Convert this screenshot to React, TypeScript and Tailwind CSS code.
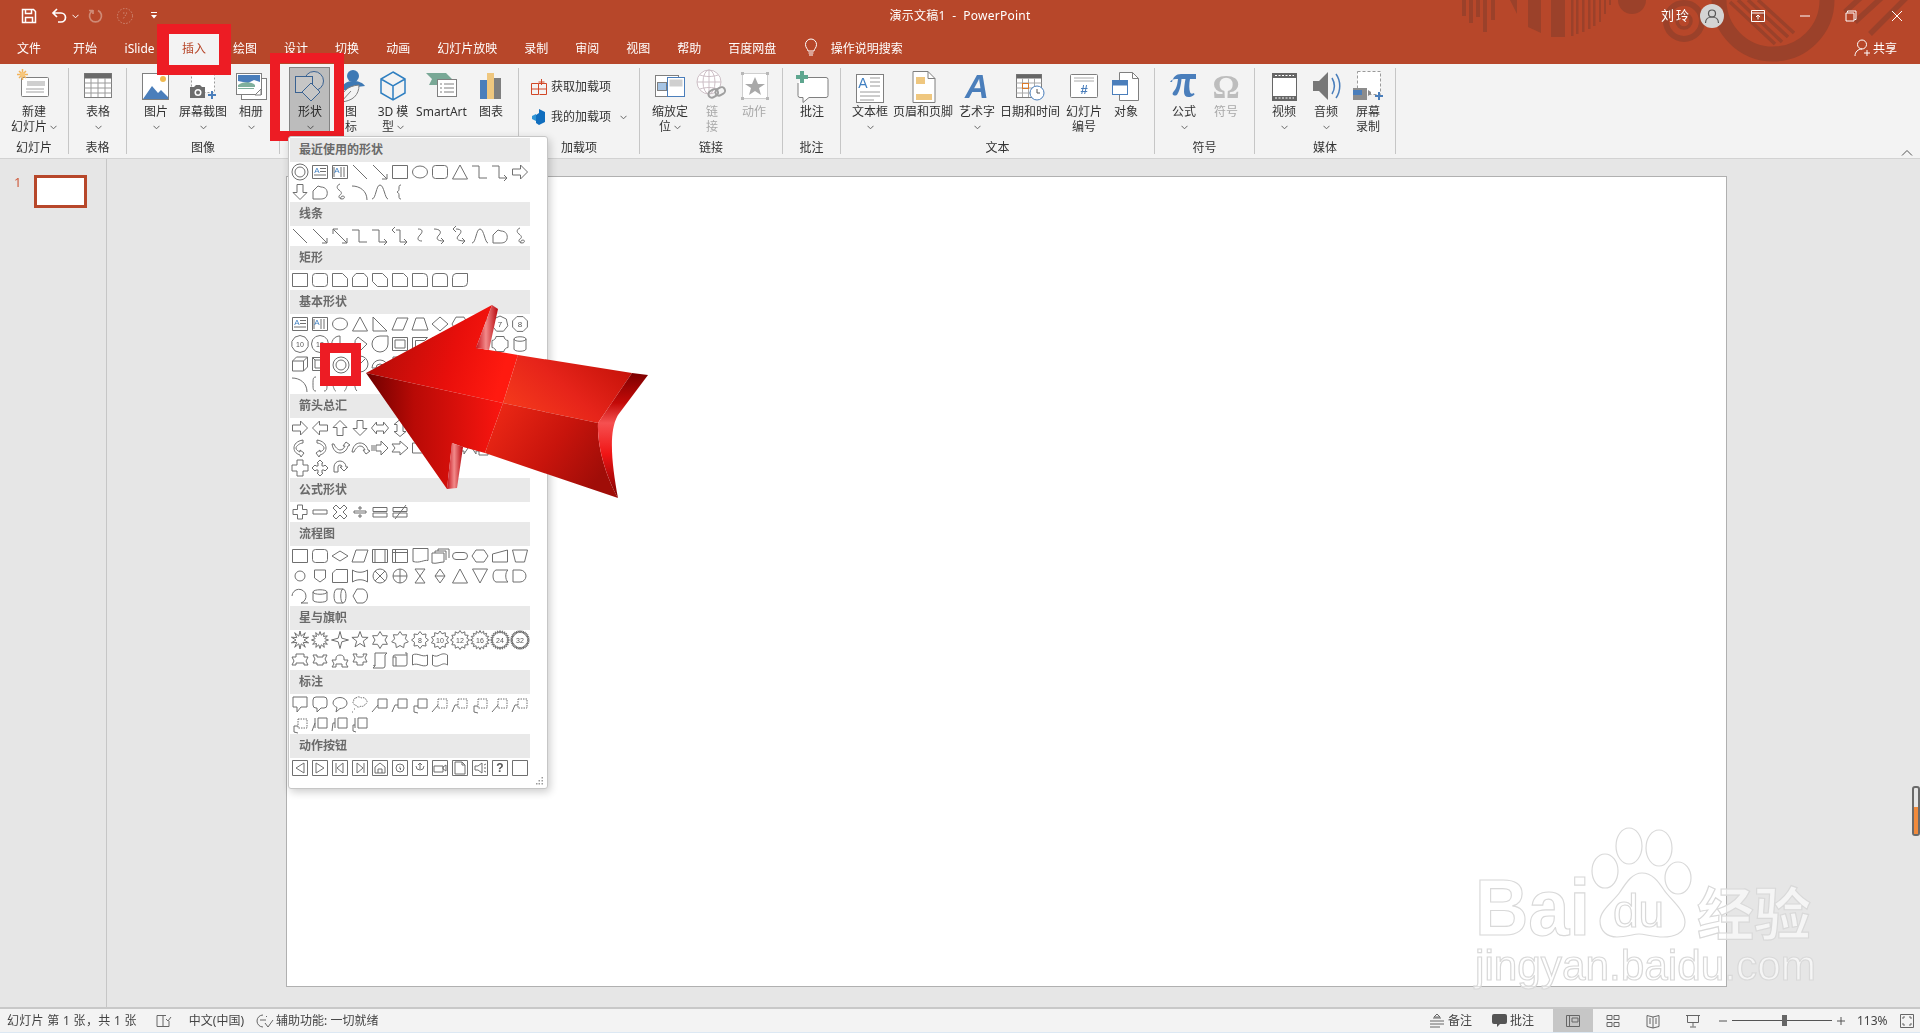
import React from "react";

type Sh = string | { d: string; dash?: string; t?: string; fs?: number; blue?: boolean };

const poly = (n: number, r: number, rot = -90) => {
  let s = "";
  for (let i = 0; i < n; i++) {
    const a = ((rot + (360 * i) / n) * Math.PI) / 180;
    s += (i ? "L" : "M") + (10 + r * Math.cos(a)).toFixed(1) + " " + (10 + r * Math.sin(a)).toFixed(1);
  }
  return s + "z";
};
const star = (n: number, r1: number, r2: number) => {
  let s = "";
  for (let i = 0; i < n * 2; i++) {
    const a = ((-90 + (180 * i) / n) * Math.PI) / 180;
    const r = i % 2 ? r2 : r1;
    s += (i ? "L" : "M") + (10 + r * Math.cos(a)).toFixed(1) + " " + (10 + r * Math.sin(a)).toFixed(1);
  }
  return s + "z";
};

const rect = "M2.5 3.5h15v13h-15z";
const round = "M5.5 3.5h9a3 3 0 0 1 3 3v7a3 3 0 0 1-3 3h-9a3 3 0 0 1-3-3v-7a3 3 0 0 1 3-3z";
const ellipse = "M2.5 10a7.5 6 0 1 0 15 0a7.5 6 0 1 0-15 0z";
const donut = "M2 10a8 8 0 1 0 16 0a8 8 0 1 0-16 0zM5 10a5 5 0 1 0 10 0a5 5 0 1 0-10 0z";
const line = "M3 3l14 14";
const arrow = "M3 3l14 14M17 12v5h-5";
const dbl = "M3 3l14 14M17 12v5h-5M3 8V3h5";
const tri = "M10 3L17.5 17H2.5z";
const rtri = "M3 3L17 17H3z";
const elbow = "M2 4h7v12h8";
const elbowA = "M2 4h7v12h7M14 13l3 3-3 3";
const elbowD = "M6 4h4v12h7M14 13l3 3-3 3M5 1L2 4l3 3";
const rightA = "M2.5 7h8V3l7 7-7 7v-4h-8z";
const leftA = "M17.5 7h-8V3l-7 7 7 7v-4h8z";
const upA = "M7 17.5v-8H3l7-7 7 7h-4v8z";
const downA = "M7 2.5v8H3l7 7 7-7h-4v-8z";
const freeform = "M3 17V9l5-5 3 1c5 0 7 4 6 8s-5 4-7 4z";
const squiggle = "M10 2c-3 1-4 4-1 6s3 4 1 5-1 4 2 4 3-3 1-3-3 2-2 3";
const arc = "M2 4c8 0 15 5 15 14";
const curve = "M2 17C6 17 6 3 10 3s5 14 8 14";
const brace = "M11 3c-2 0-2 1-2 3s0 3-2 4c2 1 2 2 2 4s0 3 2 3";
const cconn = "M8 3c5 0 5 3 2 6s-3 6 2 6";
const cconnA = "M4 3c6 0 8 3 5 6s-3 6 5 6M11 12l3 3-3 3";
const cconnD = "M6 3c6 0 6 3 3 6s-3 6 6 6M12 12l3 3-3 3M6 0L3 3l3 3";
const tbox: Sh = { d: "M2.5 3.5h15v13h-15zM10 6.5h6M10 9.5h6M4 13h12", t: "A", fs: 8, blue: true };
const vbox: Sh = { d: "M2.5 3.5h15v13h-15zM11 5v10M14 5v10M4 5v10", t: "A", fs: 8, blue: true };

const act = (g: string, t?: string): Sh => ({ d: "M2.5 2.5h15v15h-15z" + g, t, fs: t ? 12 : 8 });
const frame = "M2.5 3.5h15v13h-15zM5 6h10v8H5z";
const rCall = "M3 3h14v10h-6l-4 5v-5H3z";
const roundCall = "M6 3h8a3 3 0 0 1 3 3v5a3 3 0 0 1-3 3h-3l-4 4v-4H6a3 3 0 0 1-3-3V6a3 3 0 0 1 3-3z";
const ovalCall = "M3 9a7 5.5 0 0 1 14 0c0 3-3 5.5-7 5.5l-4 3.5 1-4.5c-2-1-4-2.500-4-4.500z";
const cloud = "M6 4c2-2 4-1 5 0 2-1 5 0 5 2 2 1 1 4-1 4 0 2-3 3-4 2-2 2-5 1-5-1-3 0-4-3-2-4-1-1 0-3 2-3z";
const c1 = "M8 5h9v9H8zM8 11L2 18";
const c2 = "M8 5h9v9H8zM8 11H5L2 18";
const c3 = "M8 5h9v9H8zM8 12H4v6l4 1";
const d1 = { d: "M8 11L2 18", dash: "M8 5h9v9H8z" };
const d2 = { d: "M8 11H5L2 18", dash: "M8 5h9v9H8z" };
const d3 = { d: "M8 12H4v6l4 1", dash: "M8 5h9v9H8z" };

const sections: { title: string; items: Sh[] }[] = [
  {
    title: "最近使用的形状",
    items: [donut, tbox, vbox, line, arrow, rect, ellipse, round, tri, elbow, elbowA, rightA, downA, freeform, squiggle, arc, curve, brace],
  },
  { title: "线条", items: [line, arrow, dbl, elbow, elbowA, elbowD, cconn, cconnA, cconnD, curve, freeform, squiggle] },
  {
    title: "矩形",
    items: [
      rect,
      round,
      "M2.500 3.500h10l5 5v8h-15z",
      "M6 3.500h8l3.500 4v9h-15v-9z",
      "M2.500 3.500h10l5 5v8h-10l-5-5z",
      "M2.500 3.500h11l4 4v9h-15z",
      "M2.500 3.500h11a4 4 0 0 1 4 4v9h-15z",
      "M6 3.500h8a3.500 3.500 0 0 1 3.500 3.500v9.500h-15V7A3.500 3.500 0 0 1 6 3.500z",
      "M6 3.500h11.500v9a4 4 0 0 1-4 4H2.500v-9a4 4 0 0 1 3.500-4z",
    ],
  },
  {
    title: "基本形状",
    items: [
      tbox,
      vbox,
      ellipse,
      tri,
      rtri,
      "M7 4h11l-5 12H2z",
      "M6 4h8l4 12H2z",
      "M10 3l8 7-8 7-8-7z",
      poly(6, 8, 0),
      poly(7, 8),
      { d: poly(7, 8), t: "7", fs: 8 },
      { d: poly(8, 8, 22.5), t: "8", fs: 8 },
      { d: poly(10, 8.5), t: "10", fs: 7 },
      { d: poly(12, 8.5), t: "12", fs: 7 },
      "M10 2v8l6 5a8 8 0 1 1-6-13z",
      "M8 3l9 7-7 7a8 8 0 0 1-2-14z",
      "M10 2h8v8a8 8 0 1 1-8-8z",
      frame,
      "M2.500 3.500h15l-3 3h-9v7l-3 3z",
      "M2.500 3.500h6v7h7v6h-13z",
      "M2 17L17 3v6L8 17z",
      "M7 3h6v4h4v6h-4v4H7v-4H3V7h4z",
      "M6 2.500h8c0 2 2 4 4 4v7c-2 0-4 2-4 4H6c0-2-2-4-4-4v-7c2 0 4-2 4-4z",
      "M4 5c0-3 12-3 12 0v10c0 3-12 3-12 0zM4 5c0 3 12 3 12 0",
      "M2.500 7l4-4h11v10l-4 4h-11zM2.500 7h11v10M13.500 7l4-4",
      "M2.500 3.500h15v13h-15zM5 6h10v8H5zM2.500 3.500L5 6M17.500 3.500L15 6",
      donut,
      "M2 10a8 8 0 1 0 16 0a8 8 0 1 0-16 0zM5 15l10-10",
      "M2 14a8 8 0 0 1 16 0h-4a4 4 0 0 0-8 0z",
      "M3 3h14v10l-4 4H3zM13 17l1-3 3-1",
      "M2 10a8 8 0 1 0 16 0a8 8 0 1 0-16 0zM7 8h.5M12.500 8h.5M6 12c2 3 6 3 8 0",
      "M10 17L3 9c-2-4 5-7 7-2 2-5 9-2 7 2z",
      "M8 2L3 9l5 2-2 7 10-10-6-1 3-5z",
      "M2 10a8 8 0 1 0 16 0a8 8 0 1 0-16 0z",
      "M13 2a8 8 0 1 0 0 16 6 8 0 0 1 0-16z",
      cloud,
      arc,
      "M6 3C3 3 3 5 3 10s0 7 3 7M14 3c3 0 3 2 3 7s0 7-3 7",
      "M6 3C4 3 4 7 2 10c2 3 2 7 4 7M14 3c2 0 2 4 4 7-2 3-2 7-4 7",
      "M7 3C4 5 4 15 7 17",
    ],
  },
  {
    title: "箭头总汇",
    items: [
      rightA,
      leftA,
      upA,
      downA,
      "M1.500 10l5-6v3h7V4l5 6-5 6v-3h-7v3z",
      "M10 1.500l6 5h-3v7h3l-6 5-6-5h3v-7H4z",
      "M10 2l3 3h-2v4h4V7l3 3-3 3v-2h-4v4h2l-3 3-3-3h2v-4H5v2l-3-3 3-3v2h4V5H7z",
      "M3 16v-4l-2 2",
      "M3 17V8h9V5l5 4-5 4v-2H6v6z",
      "M3 17V8a5 5 0 0 1 10 0v2h3l-4 4-4-4h3V8a2 2 0 0 0-4 0v9z",
      "M3 13l4-4v3h6V7h-3l4-4 4 4h-3v8H7v3z",
      "M2 14h10V7H9l4-4 4 4h-3v10H2z",
      "M13 2C7 3 4 6 4 10s3 6 6 7l1 2 3-4-4-3 0 2c-2-1-4-2-4-4 0-2 4-5 7-5z",
      "M7 2c6 1 9 4 9 8s-3 6-6 7l-1 2-3-4 4-3 0 2c2-1 4-2 4-4 0-2-4-5-7-5z",
      "M2 6c1 6 4 9 8 9s7-3 8-7l2-1-4-3-3 4 2 0c-1 2-2 4-5 4-2 0-5-3-6-6z",
      "M2 14c1-6 4-9 8-9s7 3 8 7l2 1-4 3-3-4 2 0c-1-2-2-4-5-4-2 0-5 3-6 6z",
      "M2 7v6M4 7v6M6 7h5V3l7 7-7 7v-4H6z",
      "M2 6h8V3l8 7-8 7v-3H2l3-4z",
      "M2.500 5h9l6 5-6 5h-9z",
      "M2 4h9l6 6-6 6H2l6-6z",
      "M2 3h9v14H2zM11 7h3V4l4 6-4 6v-3h-3",
      "M9 3h9v14H9zM9 7H6V4l-4 6 4 6v-3h3",
      "M3 2h14v9H3zM7 11v3H4l6 4 6-4h-3v-3",
      "M3 9h14v9H3zM7 9V6H4l6-4 6 4h-3v3",
      "M7 2h6v5h5v6h-5v5H7v-5H2V7h5z",
      "M10 2l3 3h-1v3h2l1-1 3 3-3 3-1-1h-2v3h1l-3 3-3-3h1v-3H6l-1 1-3-3 3-3 1 1h2V5H7z",
      "M4 14V9a6 6 0 0 1 12 0h2l-4 4-4-4h2a2 2 0 0 0-4 0v5z",
    ],
  },
  {
    title: "公式形状",
    items: [
      "M7.500 3h5v4.500H17v5h-4.500V17h-5v-4.500H3v-5h4.500z",
      "M3 8h14v4H3z",
      "M6 3l4 4 4-4 3 3-4 4 4 4-3 3-4-4-4 4-3-3 4-4-4-4z",
      "M4 9h12v2H4zM9 5h2v2H9zM9 13h2v2H9z",
      "M3 5.500h14v4H3zM3 11h14v4H3z",
      "M3 5.500h14v4H3zM3 11h14v4H3zM5 17L16 3",
    ],
  },
  {
    title: "流程图",
    items: [
      rect,
      round,
      "M2 10l8-5 8 5-8 5z",
      "M6 4h12l-4 12H2z",
      "M2.500 3.500h15v13h-15zM5 3.500v13M15 3.500v13",
      "M2.500 3.500h15v13h-15zM5.500 3.500v13M2.500 6.500h15",
      "M3 2.500h15v12c-4-1-8 3-15 1z",
      "M2 7h12v9c-4 0-8 2-12 1zM5 7V5h11v9M8 5V3h11v9",
      "M6 6.500h8a3.500 3.500 0 0 1 0 7H6a3.500 3.500 0 0 1 0-7z",
      "M6 4h8l4 6-4 6H6l-4-6z",
      "M2.500 8l15-4v12h-15z",
      "M2.500 4h15l-3 12h-9z",
      "M5 10a5 5 0 1 0 10 0a5 5 0 1 0-10 0z",
      "M4.500 4h11v8l-5.500 4-5.500-4z",
      "M6 3.500h11.500v13h-15V7z",
      "M2.500 4c4 3 11 3 15 0v12c-4-3-11-3-15 0z",
      "M3 10a7 7 0 1 0 14 0a7 7 0 1 0-14 0zM5 5l10 10M5 15L15 5",
      "M3 10a7 7 0 1 0 14 0a7 7 0 1 0-14 0zM3 10h14M10 3v14",
      "M5 3h10L5 17h10z",
      "M10 3l5 7-5 7-5-7zM5 10h10",
      tri,
      "M2.500 3h15L10 17z",
      "M6 4h12c-3 2-3 10 0 12H6c-4-1-4-11 0-12z",
      "M3 4h7a6 6 0 0 1 0 12H3z",
      "M2 10a7 7 0 1 1 9 7h7",
      "M3 6c0-3 14-3 14 0v8c0 3-14 3-14 0zM3 6c0 3 14 3 14 0",
      "M7 3h6c4 0 4 14 0 14H7C3 17 3 3 7 3zM13 3c-3 0-3 14 0 14",
      "M7 3h6c6 2 6 12 0 14H7L3 10z",
    ],
  },
  {
    title: "星与旗帜",
    items: [
      star(10, 9, 4),
      star(12, 8.5, 5),
      star(4, 8.5, 2.500),
      star(5, 8.5, 3.500),
      star(6, 8.5, 5),
      star(7, 8.5, 5.500),
      { d: star(8, 8.500, 6), t: "8", fs: 7 },
      { d: star(10, 9, 6.500), t: "10", fs: 7 },
      { d: star(12, 9.500, 7), t: "12", fs: 7 },
      { d: star(16, 9.500, 7), t: "16", fs: 7 },
      { d: star(24, 9.500, 7), t: "24", fs: 7 },
      { d: star(32, 9.500, 7.200), t: "32", fs: 7 },
      "M6 4h8v3h4l-2 4 2 4h-4v-2H6v2H2l2-4-2-4h4z",
      "M3 5h4v2h6V5h4l-2 4 2 4h-4v2H7v-2H3l2-4z",
      "M6 8c0-4 8-4 8 0v2h4l-2 4 2 3h-6v-3H6v3H2l2-3-2-4h4z",
      "M3 4h4c-1 2 0 3 1 3h4c1 0 2-1 1-3h4l-2 4 2 4h-4v3H7v-3H3l2-4z",
      "M6 3h11l-2 2v11a2 2 0 0 1-2 2H3l2-2V3zM3 16c1-1 2-1 2 0",
      "M3 7a2 2 0 0 1 2-2h12v9a2 2 0 0 1-2 2H3zM3 7h3v9M17 5v-2h-2",
      "M2.500 5c5-3 10 3 15 0v10c-5 3-10-3-15 0z",
      "M2.500 5c3 2 5 1 7 0s5-2 8 0v10c-3-2-5-1-7 0s-5 2-8 0z",
    ],
  },
  {
    title: "标注",
    items: [
      rCall,
      roundCall,
      ovalCall,
      { d: "M2 18h1M4 15h1", dash: cloud },
      c1,
      c2,
      c3,
      d1,
      d2,
      d3,
      d1,
      d2,
      d3,
      "M8 4h9v10H8zM5 4v10M5 9L2 17",
      "M8 4h9v10H8zM5 4v10M5 9H3l-1 8",
      "M8 4h9v10H8zM5 4v10M5 11H3v6l3 1",
    ],
  },
  {
    title: "动作按钮",
    items: [
      act("M14 5v10L6 10z"),
      act("M6 5v10l8-5z"),
      act("M13 5v10L7 10zM6 5v10"),
      act("M7 5v10l6-5zM14 5v10"),
      act("M5 15V9l5-4 5 4v6zM8 15v-4h4v4"),
      act("M6 10a4 4 0 1 0 8 0a4 4 0 1 0-8 0zM10 8v.5M9 10h1.500v2"),
      act("M6 8a4 4 0 1 0 8 0M10 5v6M8 7l2-2 2 2"),
      act("M4 8h9v6H4zM13 9l3-2v6l-3-2z"),
      act("M5 4h7l3 3v9H5zM12 4v3h3"),
      act("M5 8h3l4-3v10l-4-3H5zM14 7l2-1M14 10h2M14 13l2 1"),
      act("", "?"),
      act(""),
    ],
  },
];

function Shape({ s }: { s: Sh }) {
  const o = typeof s === "string" ? { d: s } : s;
  return (
    <svg width="20" height="20" viewBox="0 0 20 20" className="block" fill="none" stroke="#6f6f6f" strokeWidth="1">
      <path d={o.d} />
      {o.dash ? <path d={o.dash} strokeDasharray="1.500 1" /> : null}
      {o.t ? (
        <text
          x={o.blue ? 7 : 10}
          y={o.blue ? 11 : 10 + (o.fs ?? 7) * 0.36}
          textAnchor="middle"
          fontSize={o.fs ?? 7}
          fontFamily="Liberation Sans, sans-serif"
          fontWeight={o.fs === 12 ? 700 : 400}
          fill={o.blue ? "#3f7fc1" : "#555"}
          stroke="none"
        >
          {o.t}
        </text>
      ) : null}
    </svg>
  );
}

function ShapeMenu() {
  return (
    <div className="absolute left-[288px] top-[136px] z-10 w-[260px] h-[653px] bg-white border border-[#c6c6c6] rounded-[3px] p-px shadow-[2px_3px_8px_rgba(0,0,0,0.2)]">
      {sections.map((sec) => (
        <div key={sec.title}>
          <div className="h-[24px] w-[240px] bg-[#e9e9e9] pl-[9px] text-[12px] leading-[24px] font-bold text-[#6a6a6a]">{sec.title}</div>
          <div className="grid w-[240px] grid-cols-[repeat(12,20px)] auto-rows-[20px]">
            {sec.items.map((s, i) => (
              <Shape key={i} s={s} />
            ))}
          </div>
        </div>
      ))}
      <svg className="absolute right-[3px] bottom-[3px]" width="8" height="8" viewBox="0 0 8 8" fill="#9a9a9a">
        <rect x="5.500" y="0" width="1.500" height="1.500" />
        <rect x="2.500" y="3" width="1.500" height="1.500" />
        <rect x="5.500" y="3" width="1.500" height="1.500" />
        <rect x="0" y="6" width="1.500" height="1.500" />
        <rect x="2.500" y="6" width="1.500" height="1.500" />
        <rect x="5.500" y="6" width="1.500" height="1.500" />
      </svg>
    </div>
  );
}

const Chev = ({ c = "#666" }: { c?: string }) => (
  <svg width="7" height="5" viewBox="0 0 7 5" fill="none" stroke={c} className="inline-block align-middle">
    <path d="M0.500 0.800L3.500 3.800L6.500 0.800" />
  </svg>
);

const Ic = ({ children }: { children: React.ReactNode }) => (
  <svg width="36" height="36" viewBox="0 0 36 36" fill="none" className="block">
    {children}
  </svg>
);

const G = "#7f7f7f";
const B = "#4a7ebb";
const icons: Record<string, React.ReactNode> = {
  newSlide: (
    <Ic>
      <rect x="5.500" y="9.500" width="27" height="19" rx="1" fill="#fff" stroke={G} />
      <rect x="11" y="13" width="18" height="5" fill="#cfcfcf" />
      <path d="M10 21h18M10 24h18" stroke="#a0a0a0" />
      <path d="M3 3l7 7M10 3l-7 7M6.500 1v11M1 6.500h11" stroke="#f2b35a" strokeWidth="1.500" />
      <circle cx="6.500" cy="6.500" r="2.500" fill="#f7c77c" />
    </Ic>
  ),
  table: (
    <Ic>
      <rect x="4.500" y="5.500" width="27" height="24" fill="#fff" stroke={G} />
      <rect x="4.500" y="5.500" width="27" height="5" fill="#6a6a6a" />
      <path d="M4.500 15h27M4.500 20h27M4.500 25h27M11 10v19M18 10v19M25 10v19" stroke="#9a9a9a" />
    </Ic>
  ),
  picture: (
    <Ic>
      <rect x="4.500" y="5.500" width="26" height="26" fill="#fff" stroke={G} />
      <circle cx="25" cy="11" r="3" fill="#f0b94f" />
      <path d="M5 31l9-13 6 7 3-3 7 7v2z" fill={B} />
    </Ic>
  ),
  screenshot: (
    <Ic>
      <rect x="6.500" y="4.500" width="23" height="20" stroke="#9a9a9a" strokeDasharray="2 2" fill="#fff" />
      <path d="M5 19h4l2-2h4l2 2h3v11H5z" fill="#6d6d6d" />
      <circle cx="13" cy="24.500" r="3.500" fill="#fff" />
      <circle cx="13" cy="24.500" r="2" fill="#6d6d6d" />
      <path d="M27 23v8M23 27h8" stroke={B} strokeWidth="2" />
    </Ic>
  ),
  album: (
    <Ic>
      <rect x="8.500" y="10.500" width="25" height="21" fill="#fff" stroke={G} />
      <rect x="3.500" y="5.500" width="25" height="21" fill="#fff" stroke={G} />
      <path d="M5 7h22v7l-6-2-6 3-10-2z" fill={B} />
      <path d="M5 17c6-4 14-3 17 0v2H5z" fill="#7fb09c" />
      <path d="M5 20h16v1H5z" fill="#7fb09c" />
      <path d="M22 27l6-6v6z" fill="#fff" stroke={G} />
    </Ic>
  ),
  shapes: (
    <Ic>
      <circle cx="22" cy="13" r="9.500" fill="#fff" stroke={B} />
      <rect x="3.500" y="8.500" width="17" height="16" fill="#fff" stroke={B} />
      <path d="M19 15l9 9-9 9-9-9z" fill="#fff" stroke={B} />
    </Ic>
  ),
  icons: (
    <Ic>
      <circle cx="20" cy="8" r="6" fill="#3e79b4" />
      <path d="M9 22c0-6 5-9 11-9s10 2 12 5l-8 1v3z" fill="#3e79b4" />
      <path d="M8 34c0-10 6-16 18-17 0 10-6 16-18 17zM8 34l10-11" fill="#f3f3f3" stroke={G} />
    </Ic>
  ),
  cube: (
    <Ic>
      <path d="M18 4l12 7v14l-12 7-12-7V11zM6 11l12 7 12-7M18 18v14" stroke="#2f7fc1" strokeWidth="1.500" fill="#f3f3f3" />
    </Ic>
  ),
  smart: (
    <Ic>
      <path d="M2 5h20l6 6-6 6H5l3-6z" fill="#79a896" />
      <rect x="13.500" y="11.500" width="19" height="17" fill="#fff" stroke={G} />
      <path d="M16 16h2M20 16h10M16 20h2M20 20h10M16 24h2M20 24h10" stroke={G} />
    </Ic>
  ),
  chart: (
    <Ic>
      <rect x="7" y="12" width="7" height="19" fill={B} />
      <rect x="14" y="5" width="7" height="26" fill="#efc77f" />
      <rect x="21" y="10" width="7" height="21" fill="#7f7f7f" />
    </Ic>
  ),
  zoom: (
    <Ic>
      <rect x="3.500" y="7.500" width="23" height="21" fill="#fff" stroke={G} />
      <rect x="5.500" y="14.500" width="9" height="8" fill="#a6c4e4" stroke={G} />
      <path d="M14 18l3-3" stroke={B} />
      <rect x="15.500" y="9.500" width="17" height="19" fill="#fff" stroke={B} />
      <rect x="17.500" y="11.500" width="13" height="7" fill="#cfcfcf" />
    </Ic>
  ),
  link: (
    <Ic>
      <circle cx="15" cy="14" r="12" stroke="#cdbfc6" fill="#fff" />
      <path d="M3 14h24M15 2v24M6 7c6 2 12 2 18 0M6 21c6-2 12-2 18 0" stroke="#cdbfc6" />
      <ellipse cx="15" cy="14" rx="6" ry="12" stroke="#cdbfc6" />
      <rect x="14" y="22" width="10" height="7" rx="3.500" transform="rotate(-30 19 25)" stroke="#9f9f9f" strokeWidth="2" fill="none" />
      <rect x="21" y="20" width="10" height="7" rx="3.500" transform="rotate(-30 26 23)" stroke="#9f9f9f" strokeWidth="2" fill="none" />
    </Ic>
  ),
  action: (
    <Ic>
      <rect x="6.500" y="5.500" width="25" height="25" stroke="#cfcfcf" fill="#fff" />
      <path d="M19 9l3 7h7l-6 4 2 7-6-4-6 4 2-7-6-4h7z" fill="#a9a9a9" />
      <path d="M5 4h3v3H5zM30 4h3v3h-3zM5 29h3v3H5zM30 29h3v3h-3z" fill="#b8b8b8" />
    </Ic>
  ),
  comment: (
    <Ic>
      <path d="M8 9.500h24a2 2 0 0 1 2 2v16a2 2 0 0 1-2 2H15l-6 5v-5H6a2 2 0 0 1-2-2V15" fill="#fff" stroke={G} />
      <path d="M6 3h4v4h4v4h-4v4H6v-4H2V7h4z" fill="#5ea68f" />
    </Ic>
  ),
  textbox: (
    <Ic>
      <rect x="4.500" y="6.500" width="27" height="28" fill="#fff" stroke={G} />
      <text x="11" y="20" fontSize="14" fontFamily="Liberation Sans, sans-serif" textAnchor="middle" fill="#3f7fc1">A</text>
      <path d="M18 10h10M18 14h10M18 18h10M8 24h20M8 28h20M8 32h14" stroke="#9a9a9a" />
    </Ic>
  ),
  header: (
    <Ic>
      <path d="M8 3.500h15l7 7v24H8z" fill="#fff" stroke={G} />
      <path d="M23 3.500v7h7" stroke={G} />
      <rect x="11" y="9" width="9" height="7" fill="#efc77f" />
      <rect x="11" y="26" width="16" height="6" fill="#efc77f" />
    </Ic>
  ),
  wordart: (
    <Ic>
      <text x="18" y="30" fontSize="33" fontStyle="italic" fontWeight="700" fontFamily="Liberation Sans, sans-serif" textAnchor="middle" fill="#4a7ebb">A</text>
    </Ic>
  ),
  date: (
    <Ic>
      <rect x="4.500" y="6.500" width="25" height="23" fill="#fff" stroke={G} />
      <rect x="4.500" y="6.500" width="25" height="4" fill="#666" />
      <path d="M4.500 15h25M4.500 20h25M4.500 25h25M10.500 10v19M16.500 10v19M22.500 10v19" stroke="#a8a8a8" />
      <rect x="10.500" y="15.500" width="6" height="5" stroke="#dc7a2a" />
      <circle cx="25" cy="25" r="7" fill="#fff" stroke={B} />
      <path d="M25 21v4h3" stroke="#555" />
    </Ic>
  ),
  number: (
    <Ic>
      <rect x="4.500" y="6.500" width="27" height="23" rx="1" fill="#fff" stroke={G} />
      <path d="M8 10h20M8 13h20" stroke="#aaa" />
      <text x="18" y="26" fontSize="13" fontWeight="700" fontFamily="Liberation Sans, sans-serif" textAnchor="middle" fill="#4a7ebb">#</text>
    </Ic>
  ),
  object: (
    <Ic>
      <path d="M11.500 4.500h13l6 6v22h-19z" fill="#fff" stroke={G} />
      <path d="M24.500 4.500v6h6" stroke={G} />
      <rect x="4.500" y="12.500" width="15" height="14" fill="#fff" stroke={B} />
      <rect x="4.500" y="12.500" width="15" height="5" fill={B} />
    </Ic>
  ),
  pi: (
    <Ic>
      <path
        d="M6 14c1-5 4-8 9-8h15v5h-6c-1 5-1 10 0 13 .6 2 2 2 4 1l.5 1.500c-2 2-4 2.500-6 2.500-3 0-4.500-2-4.500-5 0-4 .5-8 1.500-13h-4c-.5 6-2 12-4 15-1 2-4 2-5 0 0-2 2-3 3-5 1.500-3 2-6 2.500-10h-2c-3 0-5 1-6 3z"
        fill="#4a7ebb"
      />
    </Ic>
  ),
  omega: (
    <Ic>
      <text x="18" y="30" fontSize="34" fontWeight="700" fontFamily="Liberation Serif, serif" textAnchor="middle" fill="#bdbdbd">Ω</text>
    </Ic>
  ),
  video: (
    <Ic>
      <rect x="6.500" y="5.500" width="24" height="27" fill="#fff" stroke="#666" />
      <path d="M6.500 6h24v4h-24zM6.500 28h24v4h-24z" fill="#666" />
      <path d="M9 7.500h19M9 30h19" stroke="#fff" strokeDasharray="2 1.500" />
    </Ic>
  ),
  audio: (
    <Ic>
      <path d="M5 13h6l9-9v28l-9-9H5z" fill="#777" />
      <path d="M24 10c3 5 3 11 0 16M28 6c5 7 5 17 0 24" stroke={B} strokeWidth="1.500" />
    </Ic>
  ),
  record: (
    <Ic>
      <rect x="7.500" y="3.500" width="23" height="23" stroke="#9a9a9a" strokeDasharray="3 2" fill="#fff" />
      <rect x="3" y="20" width="14" height="12" fill="#8c8c8c" />
      <rect x="3" y="22" width="9" height="5" fill={B} />
      <path d="M18 22v6l3-2v-2z" fill="#8c8c8c" />
      <path d="M29 24v8M25 28h8" stroke={B} strokeWidth="2" />
    </Ic>
  ),
};

type Btn = { w: string; icon: string; l1: string; l2?: string; chev?: boolean; dim?: boolean; hl?: boolean };

function RibbonBtn({ b }: { b: Btn }) {
  return (
    <div className={`${b.w} flex flex-col items-center ${b.dim ? "text-[#a8a8a8]" : "text-[#333]"}`}>
      <div className="h-[36px] w-[36px]">{icons[b.icon]}</div>
      <div className="h-[15px] whitespace-nowrap text-[12px] leading-[15px]">{b.l1}</div>
      <div className="h-[15px] whitespace-nowrap text-[12px] leading-[15px]">
        {b.l2}
        {b.chev ? (
          <span className={b.l2 ? "ml-[3px]" : ""}>
            <Chev />
          </span>
        ) : null}
      </div>
    </div>
  );
}

function Group({ w, pl, label, btns, children }: { w: string; pl: string; label: string; btns?: Btn[]; children?: React.ReactNode }) {
  return (
    <div className={`${w} mt-[4px] h-[86px] shrink-0 border-r border-[#c6c6c6]`}>
      <div className={`flex h-[72px] ${pl}`}>
        {btns?.map((b) => (
          <RibbonBtn key={b.icon} b={b} />
        ))}
        {children}
      </div>
      <div className="h-[14px] text-center text-[12px] leading-[16px] text-[#333]">{label}</div>
    </div>
  );
}

const tabs: { t: string; c: string }[] = [
  { t: "文件", c: "px-[13.500px] mr-[5px]" },
  { t: "开始", c: "px-[13.500px]" },
  { t: "iSlide", c: "px-[14px]" },
  { t: "插入", c: "px-[13.500px] bg-[#f3f3f3] text-[#b7472a]" },
  { t: "绘图", c: "px-[13.500px]" },
  { t: "设计", c: "px-[13.500px]" },
  { t: "切换", c: "px-[13.500px]" },
  { t: "动画", c: "px-[13.500px]" },
  { t: "幻灯片放映", c: "px-[13.500px]" },
  { t: "录制", c: "px-[13.500px]" },
  { t: "审阅", c: "px-[13.500px]" },
  { t: "视图", c: "px-[13.500px]" },
  { t: "帮助", c: "px-[13.500px]" },
  { t: "百度网盘", c: "px-[13.500px]" },
];

function TitleArt() {
  const c = "#9b412a";
  return (
    <svg className="absolute left-[1400px] top-0" width="520" height="64" viewBox="0 0 520 64" fill={c}>
      <rect x="62" y="0" width="4" height="16" />
      <rect x="69" y="0" width="4" height="23" />
      <rect x="76" y="0" width="4" height="17" />
      <rect x="83" y="0" width="4" height="32" />
      <rect x="91" y="0" width="4" height="20" />
      <path d="M110 0h7v14z" />
      <path d="M128 0h13v33l-13-6z" />
      <path d="M151 0h14v37h-14z" />
      <rect x="171" y="0" width="2.500" height="36" />
      <rect x="176" y="0" width="2.500" height="34" />
      <rect x="182" y="0" width="2.500" height="32" />
      <rect x="188" y="0" width="2.500" height="29" />
      <rect x="193" y="0" width="2.500" height="26" />
      <rect x="199" y="0" width="2" height="22" />
      <rect x="204" y="0" width="2" height="14" />
      <rect x="209" y="0" width="2" height="5" />
      <circle cx="232" cy="0" r="14" />
      <circle cx="284" cy="21" r="18" fill="none" stroke={c} strokeWidth="6" />
      <circle cx="284" cy="21" r="7" fill="none" stroke={c} strokeWidth="3.500" />
      <circle cx="373" cy="0" r="54" fill="none" stroke={c} strokeWidth="15" />
      <path d="M330 2l45 42M338 0l44 42M348 0l40 37M358 0l36 33" stroke={c} strokeWidth="3.500" />
      <path d="M445 12l24-22M455 22l35-32M470 34l44-44" stroke={c} strokeWidth="5.500" />
    </svg>
  );
}

function RedArrow() {
  return (
    <svg className="absolute left-[350px] top-[290px] z-20" width="310" height="220" viewBox="0 0 310 220">
      <defs>
        <linearGradient id="a1" x1="0" y1="0" x2="1" y2="0.200">
          <stop offset="0" stopColor="#a80c08" />
          <stop offset="0.650" stopColor="#e80f0b" />
          <stop offset="1" stopColor="#ff1a10" />
        </linearGradient>
        <linearGradient id="a2" x1="0" y1="0" x2="1" y2="0">
          <stop offset="0" stopColor="#6e0000" />
          <stop offset="0.350" stopColor="#b80a06" />
          <stop offset="1" stopColor="#fb1610" />
        </linearGradient>
        <linearGradient id="a3" x1="0" y1="0.800" x2="1" y2="0.200">
          <stop offset="0" stopColor="#f63b1c" />
          <stop offset="0.500" stopColor="#e6241a" />
          <stop offset="1" stopColor="#c51209" />
        </linearGradient>
        <linearGradient id="a4" x1="0" y1="0" x2="1" y2="0.500">
          <stop offset="0" stopColor="#f22b17" />
          <stop offset="0.600" stopColor="#c8140c" />
          <stop offset="1" stopColor="#a00d08" />
        </linearGradient>
        <linearGradient id="a5" x1="0" y1="0" x2="0" y2="1">
          <stop offset="0" stopColor="#7c0000" />
          <stop offset="0.240" stopColor="#c40a08" />
          <stop offset="0.400" stopColor="#f65050" />
          <stop offset="0.650" stopColor="#f01515" />
          <stop offset="1" stopColor="#7f0000" />
        </linearGradient>
        <linearGradient id="a6" x1="0" y1="0" x2="1" y2="0">
          <stop offset="0" stopColor="#c4101a" />
          <stop offset="0.450" stopColor="#f28a8a" />
          <stop offset="1" stopColor="#b8060c" />
        </linearGradient>
      </defs>
      <path d="M16 83L142 15L126 58L139 60L168 65L153 113z" fill="url(#a1)" />
      <path d="M16 83L153 113L135 163L113 157L102 153L97 199z" fill="url(#a2)" />
      <path d="M168 65L282 83L248 133L153 113z" fill="url(#a3)" />
      <path d="M153 113L248 133C247 160 258 190 268 208L135 163z" fill="url(#a4)" />
      <path d="M282 83L298 85L268 125C258 142 262 175 268 208C258 190 247 160 248 133z" fill="url(#a5)" />
      <path d="M142 15L148 19L139 60L126 58z" fill="url(#a6)" />
      <path d="M102 153L113 157L107 198L97 199z" fill="url(#a6)" />
    </svg>
  );
}

function Watermark() {
  const st = { fill: "#ffffff", fillOpacity: 0.6, stroke: "#d9d9d9", strokeWidth: 1.2 };
  return (
    <svg className="absolute left-[1470px] top-[825px] z-10" width="350" height="170" viewBox="0 0 350 170">
      <g {...st}>
        <text x="5" y="110" fontSize="79" fontWeight="700" fontFamily="Liberation Sans, sans-serif" textLength="115" lengthAdjust="spacingAndGlyphs">Bai</text>
        <ellipse cx="159" cy="21" rx="13" ry="18" />
        <ellipse cx="189" cy="23" rx="13" ry="18" />
        <ellipse cx="135" cy="46" rx="13" ry="17" />
        <ellipse cx="208" cy="53" rx="13" ry="16" />
        <path d="M172 48c10 0 16 8 22 17s21 20 21 32c0 12-12 15-22 15-10 0-18-3-24-3s-12 3-22 3c-10 0-17-6-17-16 0-11 14-20 20-29s12-19 22-19z" />
        <text x="143" y="102" fontSize="46" fontFamily="Liberation Sans, sans-serif">du</text>
        <text x="227" y="110" fontSize="57" fontWeight="700" fontFamily="Noto Sans CJK SC, sans-serif">经验</text>
        <text x="5" y="155" fontSize="42.300" fontFamily="Liberation Sans, sans-serif">jingyan.baidu.com</text>
      </g>
    </svg>
  );
}

const StatusIcon = ({ children, w = 16 }: { children: React.ReactNode; w?: number }) => (
  <svg width={w} height="16" viewBox={`0 0 ${w} 16`} fill="none" stroke="#666" className="block">
    {children}
  </svg>
);

export default function App() {
  return (
    <div className="relative flex h-[1033px] w-[1920px] flex-col overflow-hidden bg-[#e6e6e6] font-['Noto_Sans','Noto_Sans_CJK_SC','Liberation_Sans',sans-serif] text-[12px]">
      <div className="relative h-[64px] shrink-0 bg-[#b7472a] text-white">
        <TitleArt />
        <div className="relative grid h-[32px] grid-cols-[1fr_auto_1fr] items-center">
          <div className="flex items-center pl-[21px]">
            <svg width="16" height="16" viewBox="0 0 16 16" fill="none" stroke="#fff" strokeWidth="1.500">
              <path d="M1.500 1.500h11l2 2v11h-13zM4.500 1.500v4h6v-4M4.500 14.500v-5h7v5" />
            </svg>
            <svg className="ml-[14px]" width="18" height="16" viewBox="0 0 18 16" fill="none" stroke="#fff" strokeWidth="1.700">
              <path d="M6 1L2 5l4 4M2 5h8a4.500 4.500 0 0 1 0 9H7" />
            </svg>
            <span className="ml-[3px]">
              <Chev c="#fff" />
            </span>
            <svg className="ml-[8px]" width="18" height="16" viewBox="0 0 18 16" fill="none" stroke="#cf8a76" strokeWidth="1.700">
              <path d="M11 2.500a6 6 0 1 1-5 0M6 2v4M6 2.500H2" />
            </svg>
            <svg className="ml-[11px]" width="18" height="18" viewBox="0 0 18 18" fill="none" stroke="#cf8a76" strokeDasharray="1.500 1.500">
              <circle cx="9" cy="9" r="7.500" />
              <path d="M7 6h4l-4 6" />
            </svg>
            <svg className="ml-[15px]" width="10" height="10" viewBox="0 0 10 10" fill="#fff">
              <rect x="2" y="1" width="6" height="1" />
              <path d="M2 4h6L5 7.500z" />
            </svg>
          </div>
          <div className="whitespace-pre tracking-[0.25px] text-[12px]">演示文稿1  -  PowerPoint</div>
          <div className="flex items-center justify-end">
            <span className="mr-[9px] tracking-[2px] text-[13px]">刘玲</span>
            <div className="flex h-[24px] w-[24px] items-center justify-center rounded-full bg-[#d4d4d4]">
              <svg width="16" height="16" viewBox="0 0 16 16" fill="none" stroke="#555" strokeWidth="1.200">
                <circle cx="8" cy="5.500" r="3.500" />
                <path d="M1.500 15c0-4 3-6 6.500-6s6.500 2 6.500 6" />
              </svg>
            </div>
            <svg className="ml-[27px]" width="14" height="12" viewBox="0 0 14 12" fill="none" stroke="#fff">
              <path d="M.5 .5h13v11H.5zM.5 3h13M7 9.500V5M5 7l2-2 2 2" />
            </svg>
            <svg className="ml-[34px]" width="12" height="12" viewBox="0 0 12 12" stroke="#fff">
              <path d="M1 6h10" />
            </svg>
            <svg className="ml-[34px]" width="12" height="12" viewBox="0 0 12 12" fill="none" stroke="#fff">
              <path d="M2.500 2.500V1h8.500v8.500H9.500M1 3h8v8H1z" />
            </svg>
            <svg className="ml-[34px] mr-[17px]" width="12" height="12" viewBox="0 0 12 12" stroke="#fff">
              <path d="M1 1l10 10M11 1L1 11" />
            </svg>
          </div>
        </div>
        <div className="relative flex h-[32px] items-center pl-[3.500px]">
          {tabs.map((t) => (
            <div key={t.t} className={`flex h-[32px] items-center pt-[2px] ${t.c}`}>
              {t.t}
            </div>
          ))}
          <svg className="ml-[13px]" width="16" height="20" viewBox="0 0 16 20" fill="none" stroke="#fff">
            <path d="M5 13c0-2-2.500-3-2.500-6.500a5.500 5.500 0 0 1 11 0C13.500 10 11 11 11 13zM5.500 15h5M6 17h4" />
          </svg>
          <div className="ml-[12px] pt-[2px]">操作说明搜索</div>
          <div className="ml-auto mr-[23px] flex items-center gap-[3px]">
            <svg width="16" height="18" viewBox="0 0 16 18" fill="none" stroke="#fff">
              <circle cx="8" cy="5.500" r="4.500" />
              <path d="M1 17c0-4 3-7 7-7M10 14h6M13 11v6" />
            </svg>
            <span className="pt-[2px]">共享</span>
          </div>
        </div>
      </div>

      <div className="flex h-[95px] shrink-0 border-b border-[#d2d2d2] bg-[#f3f3f3]">
        <Group w="w-[69px]" pl="pl-[6px]" label="幻灯片" btns={[{ w: "w-[56px]", icon: "newSlide", l1: "新建", l2: "幻灯片", chev: true }]} />
        <Group w="w-[58px]" pl="pl-[7px]" label="表格" btns={[{ w: "w-[44px]", icon: "table", l1: "表格", chev: true }]} />
        <Group
          w="w-[153px]"
          pl="pl-[7px]"
          label="图像"
          btns={[
            { w: "w-[44px]", icon: "picture", l1: "图片", chev: true },
            { w: "w-[50px]", icon: "screenshot", l1: "屏幕截图", chev: true },
            { w: "w-[46px]", icon: "album", l1: "相册", chev: true },
          ]}
        />
        <Group
          w="w-[239px]"
          pl="pl-[9px]"
          label="插图"
          btns={[
            { w: "w-[42px]", icon: "shapes", l1: "形状", chev: true },
            { w: "w-[40px]", icon: "icons", l1: "图", l2: "标" },
            { w: "w-[44px]", icon: "cube", l1: "3D 模", l2: "型", chev: true },
            { w: "w-[53px]", icon: "smart", l1: "SmartArt" },
            { w: "w-[46px]", icon: "chart", l1: "图表" },
          ]}
        />
        <Group w="w-[121px]" pl="pl-[11px]" label="加载项">
          <div className="flex flex-col gap-[10px] pt-[9px] text-[#333]">
            <div className="flex h-[20px] items-center gap-[2px]">
              <svg width="18" height="18" viewBox="0 0 18 18" fill="none" stroke="#d24726">
                <path d="M1.500 5.500h7v11h-7zM1.500 11h15v5.500h-7M8.500 5.500h8v5.500M11.500 1v6M8.500 4h6" />
              </svg>
              <span className="ml-[1px] whitespace-nowrap">获取加载项</span>
            </div>
            <div className="flex h-[20px] items-center gap-[2px]">
              <svg width="18" height="18" viewBox="0 0 18 18">
                <path d="M9 1l6 3v10l-6 3-3-2V7l3-2z" fill="#106ebe" />
                <path d="M2 8l4-2v7l-4-2z" fill="#2f95d6" />
              </svg>
              <span className="ml-[1px] whitespace-nowrap">我的加载项</span>
              <span className="ml-[7px]">
                <Chev />
              </span>
            </div>
          </div>
        </Group>
        <Group
          w="w-[143px]"
          pl="pl-[8px]"
          label="链接"
          btns={[
            { w: "w-[44px]", icon: "zoom", l1: "缩放定", l2: "位", chev: true },
            { w: "w-[40px]", icon: "link", l1: "链", l2: "接", dim: true },
            { w: "w-[44px]", icon: "action", l1: "动作", dim: true },
          ]}
        />
        <Group w="w-[58px]" pl="pl-[7px]" label="批注" btns={[{ w: "w-[44px]", icon: "comment", l1: "批注" }]} />
        <Group
          w="w-[314px]"
          pl="pl-[7px]"
          label="文本"
          btns={[
            { w: "w-[44px]", icon: "textbox", l1: "文本框", chev: true },
            { w: "w-[62px]", icon: "header", l1: "页眉和页脚" },
            { w: "w-[46px]", icon: "wordart", l1: "艺术字", chev: true },
            { w: "w-[60px]", icon: "date", l1: "日期和时间" },
            { w: "w-[48px]", icon: "number", l1: "幻灯片", l2: "编号" },
            { w: "w-[36px]", icon: "object", l1: "对象" },
          ]}
        />
        <Group
          w="w-[100px]"
          pl="pl-[8px]"
          label="符号"
          btns={[
            { w: "w-[42px]", icon: "pi", l1: "公式", chev: true },
            { w: "w-[42px]", icon: "omega", l1: "符号", dim: true },
          ]}
        />
        <Group
          w="w-[141px]"
          pl="pl-[8px]"
          label="媒体"
          btns={[
            { w: "w-[42px]", icon: "video", l1: "视频", chev: true },
            { w: "w-[42px]", icon: "audio", l1: "音频", chev: true },
            { w: "w-[42px]", icon: "record", l1: "屏幕", l2: "录制" },
          ]}
        />
        <div className="ml-auto mr-[7px] self-end pb-[1px]">
          <svg width="12" height="8" viewBox="0 0 12 8" fill="none" stroke="#555">
            <path d="M1 6.500L6 1.500l5 5" />
          </svg>
        </div>
      </div>

      <div className="flex min-h-0 flex-1">
        <div className="flex w-[107px] shrink-0 items-start border-r border-[#c6c6c6] pl-[14px] pt-[16px]">
          <span className="w-[20px] text-[13px] leading-[14px] text-[#cf5a3c]">1</span>
          <div className="h-[33px] w-[53px] border-[3px] border-[#b7472a] bg-white" />
        </div>
        <div className="min-w-0 flex-1 pl-[179px] pt-[17px]">
          <div className="h-[811px] w-[1441px] border border-[#b0b0b0] bg-white" />
        </div>
      </div>

      <div className="flex h-[26px] shrink-0 items-center border-t-2 border-b border-t-[#c8c8c8] border-b-[#dce8f3] bg-[#f3f3f3] pl-[7px] text-[#444]">
        <span className="whitespace-pre tracking-[0.3px]">幻灯片 第 1 张，共 1 张</span>
        <span className="ml-[19px]">
          <StatusIcon>
            <path d="M1 2.500h6v11H1zM7 2.500h3M7 13.500h6V8M10 6l2 2 3-4" />
          </StatusIcon>
        </span>
        <span className="ml-[17px]">中文(中国)</span>
        <span className="ml-[12px]">
          <StatusIcon w={18}>
            <path d="M7 2a6 6 0 1 0 0 12M10 3l1 1M4 7h6M9 10l3 4 5-7" />
          </StatusIcon>
        </span>
        <span className="ml-[2px] whitespace-pre">辅助功能: 一切就绪</span>
        <div className="ml-auto flex h-full items-center">
          <StatusIcon>
            <path d="M4 5h8M1 8h14M1 11h14M1 14h10M8 1l3 3H5z" />
          </StatusIcon>
          <span className="ml-[3px] w-[30px]">备注</span>
          <svg className="ml-[14px]" width="15" height="15" viewBox="0 0 15 15" fill="#555">
            <path d="M2 1h11a2 2 0 0 1 2 2v6a2 2 0 0 1-2 2H8l-3 3v-3H2a2 2 0 0 1-2-2V3a2 2 0 0 1 2-2z" />
          </svg>
          <span className="ml-[3px]">批注</span>
          <div className="ml-[19px] flex h-full w-[40px] items-center justify-center bg-[#c6c6c6]">
            <StatusIcon>
              <path d="M1.500 2.500h13v11h-13zM4.500 2.500v11M7 5h6v4H7z" />
            </StatusIcon>
          </div>
          <div className="flex h-full w-[40px] items-center justify-center">
            <StatusIcon>
              <path d="M2 2.500h5v4H2zM9 2.500h5v4H9zM2 9.500h5v4H2zM9 9.500h5v4H9z" />
            </StatusIcon>
          </div>
          <div className="flex h-full w-[40px] items-center justify-center">
            <StatusIcon>
              <path d="M2 2.500l6 1.500 6-1.500v11L8 15l-6-1.500zM8 4v11M4 6h2M4 8h2M4 10h2M10 6h2M10 8h2M10 10h2" />
            </StatusIcon>
          </div>
          <div className="flex h-full w-[40px] items-center justify-center">
            <StatusIcon>
              <path d="M1 2.500h14M2.500 2.500v7h11v-7M8 9.500v4M5 14h6" />
            </StatusIcon>
          </div>
          <svg className="ml-[6px]" width="8" height="8" viewBox="0 0 8 8" stroke="#555">
            <path d="M0 4h8" />
          </svg>
          <div className="relative ml-[5px] h-px w-[100px] bg-[#555]">
            <div className="absolute left-[50px] top-[-5px] h-[11px] w-[5px] bg-[#666]" />
          </div>
          <svg className="ml-[5px]" width="8" height="8" viewBox="0 0 8 8" stroke="#555">
            <path d="M0 4h8M4 0v8" />
          </svg>
          <span className="ml-[12px] w-[42px]">113%</span>
          <svg className="mr-[5px]" width="16" height="16" viewBox="0 0 16 16" fill="none" stroke="#666">
            <path d="M1.500 1.500h13v13h-13zM4 6V4h2M10 4h2v2M12 10v2h-2M6 12H4v-2" />
          </svg>
        </div>
      </div>

      <div className="absolute left-[157px] top-[24px] z-20 h-[51px] w-[74px] border-x-[12px] border-y-[10px] border-[#ed1c24]" />
      <div className="absolute left-[270px] top-[53px] z-[5] h-[88px] w-[74px] border-[10px] border-[#ed1c24]" />
      <div className="absolute left-[289px] top-[67px] h-[65px] w-[41px] border border-[#8a8a8a] bg-[#c6c6c6] mix-blend-multiply" />
      <div className="absolute left-[320px] top-[343px] z-[15] flex h-[43px] w-[41px] items-center justify-center border-[10px] border-[#ed1c24] bg-white">
        <Shape s={donut} />
      </div>
      <ShapeMenu />
      <RedArrow />
      <Watermark />
      <div className="absolute left-[1912px] top-[786px] z-20 h-[50px] w-[8px] rounded-[3px] border-[2px] border-[#6a6a6a] bg-[#e6e6e6]">
        <div className="absolute bottom-0 left-0 h-[27px] w-full bg-[#f08a3c]" />
      </div>
    </div>
  );
}
